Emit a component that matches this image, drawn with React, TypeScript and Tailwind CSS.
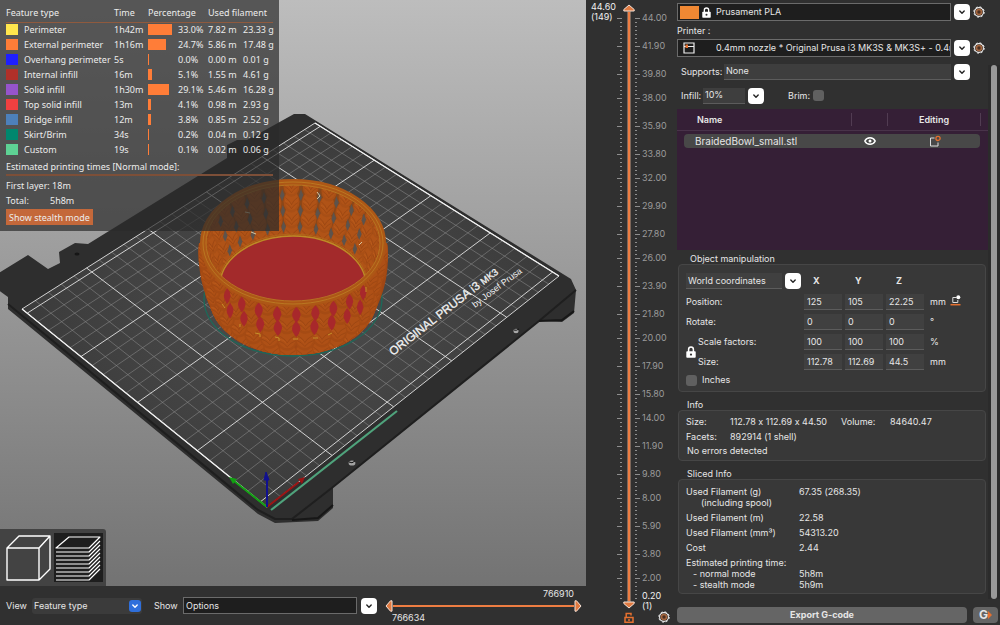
import { ReactNode } from 'react';
import clsx from 'clsx';

const features = [
    { name: 'Perimeter', color: '#ffe64d', time: '1h42m', pct: 33.0, m: '7.82 m', g: '23.33 g' },
    { name: 'External perimeter', color: '#ff7d38', time: '1h16m', pct: 24.7, m: '5.86 m', g: '17.48 g' },
    { name: 'Overhang perimeter', color: '#1f1fff', time: '5s', pct: 0.0, m: '0.00 m', g: '0.01 g' },
    { name: 'Internal infill', color: '#b03029', time: '16m', pct: 5.1, m: '1.55 m', g: '4.61 g' },
    { name: 'Solid infill', color: '#9654cc', time: '1h30m', pct: 29.1, m: '5.46 m', g: '16.28 g' },
    { name: 'Top solid infill', color: '#f04040', time: '13m', pct: 4.1, m: '0.98 m', g: '2.93 g' },
    { name: 'Bridge infill', color: '#4d80ba', time: '12m', pct: 3.8, m: '0.85 m', g: '2.52 g' },
    { name: 'Skirt/Brim', color: '#00876e', time: '34s', pct: 0.2, m: '0.04 m', g: '0.12 g' },
    { name: 'Custom', color: '#5ed194', time: '19s', pct: 0.1, m: '0.02 m', g: '0.06 g' },
];

// labelled layer heights, keyed by tick index (one tick = 0.3 mm)
const layerLabels: Record<number, string> = {
    0: '44.00',
    7: '41.90',
    14: '39.80',
    20: '38.00',
    27: '35.90',
    34: '33.80',
    40: '32.00',
    47: '29.90',
    54: '27.80',
    60: '26.00',
    67: '23.90',
    74: '21.80',
    80: '20.00',
    87: '17.90',
    94: '15.80',
    100: '14.00',
    107: '11.90',
    114: '9.80',
    120: '8.00',
    127: '5.90',
    134: '3.80',
    140: '2.00',
};

const manipulation = [
    { label: 'Position:', values: ['125', '105', '22.25'], unit: 'mm' },
    { label: 'Rotate:', values: ['0', '0', '0'], unit: '°' },
    { label: 'Scale factors:', values: ['100', '100', '100'], unit: '%' },
    { label: 'Size:', values: ['112.78', '112.69', '44.5'], unit: 'mm' },
];

// bed corners on screen: origin, +x, +x+y, +y
const BED = [
    [267, 507],
    [559, 276],
    [315, 123],
    [22, 309],
];

const project = (u: number, v: number) => {
    const [[x0, y0], [x1, y1], [x2, y2], [x3, y3]] = BED;
    const dx1 = x1 - x2;
    const dx2 = x3 - x2;
    const dx3 = x0 - x1 + x2 - x3;
    const dy1 = y1 - y2;
    const dy2 = y3 - y2;
    const dy3 = y0 - y1 + y2 - y3;
    const det = dx1 * dy2 - dx2 * dy1;
    const g = (dx3 * dy2 - dx2 * dy3) / det;
    const h = (dx1 * dy3 - dx3 * dy1) / det;
    const s = u / 250;
    const t = v / 210;
    const w = g * s + h * t + 1;
    return [((x1 - x0 + g * x1) * s + (x3 - x0 + h * x3) * t + x0) / w, ((y1 - y0 + g * y1) * s + (y3 - y0 + h * y3) * t + y0) / w];
};

const bedLine = (u1: number, v1: number, u2: number, v2: number) => {
    const a = project(u1, v1);
    const b = project(u2, v2);
    return `M${a[0].toFixed(1)} ${a[1].toFixed(1)}L${b[0].toFixed(1)} ${b[1].toFixed(1)}`;
};

const thin: string[] = [];
const bold: string[] = [bedLine(0, 0, 250, 0), bedLine(0, 210, 250, 210)];
for (let u = 0; u <= 250; u += 10) (u % 50 ? thin : bold).push(bedLine(u, 0, u, 210));
for (let v = 0; v <= 200; v += 10) (v % 50 ? thin : bold).push(bedLine(0, v + 5, 250, v + 5));

const ring = (deg: number, t: number, a: number[], b: number[]) => {
    const r = (deg * Math.PI) / 180;
    const mix = (i: number) => a[i] + (b[i] - a[i]) * t;
    return [293 + mix(1) * Math.cos(r), mix(0) + mix(2) * Math.sin(r)];
};

// [center y, rx, ry]
const RIM = [243, 90, 60];
const FLOOR = [286, 72, 50];
const OUTER = [243, 93, 62];
const BASE = [297, 80, 54];

const Braid = ({ inner }: { inner?: boolean }) => {
    const items: ReactNode[] = [];
    const levels = inner ? [0.95, 0.65, 0.35, 0.05] : [1.08, 0.76, 0.4, 0.05];
    levels.forEach((t) => {
        for (let i = 0; i <= (inner ? 14 : 15); i++) {
            const deg = inner ? 181.5 + i * 12.5 : -4 + i * 12.25;
            const [x, y] = inner ? ring(deg, t, RIM, FLOOR) : ring(deg, t, OUTER, BASE);
            const face = Math.abs(Math.sin((deg * Math.PI) / 180));
            const rx = inner ? 5 + 3 * face : 5.5 + 4.5 * face;
            const ry = inner ? 9 + 2 * face : 11;
            const tilt = inner ? (deg - 270) * 0.15 : (90 - deg) * 0.15;
            items.push(
                <g key={`${t}-${i}`} transform={`translate(${x.toFixed(1)} ${y.toFixed(1)}) rotate(${tilt})`} fill="none">
                    <ellipse rx={rx} ry={ry} fill={inner ? '#a84f16' : '#a54b14'} />
                    <ellipse cy="-1" rx={rx - 1.2} ry={ry - 1.5} fill={inner ? '#b05317' : '#ae5016'} />
                    <path
                        d={`M${2 - rx} -4Q${-rx * 0.2} -1 0 3Q${rx * 0.2} -1 ${rx - 2} -4M${1.5 - rx} 1Q${-rx * 0.3} 3 0 7Q${rx * 0.3} 3 ${rx - 1.5} 1`}
                        stroke="#964413"
                        strokeWidth=".9"
                        opacity=".7"
                    />
                    <path d={`M${1.5 - rx} -1Q${-rx * 0.3} 0 -1 3`} stroke="#bf601f" strokeWidth=".8" opacity=".7" />
                </g>
            );
        }
    });
    return <g>{items}</g>;
};

// openings between the strands of the back wall
const BackHoles = () => (
    <g fill="#5d534c">
        {[2, 3, 4, 5, 6, 7, 8, 9, 10, 11].map((i) =>
            [0.22, 0.52, 0.82].map((t) => {
                const [x, y] = ring(187.75 + i * 12.5, t, RIM, FLOOR);
                return <path key={`${i}-${t}`} d={`M${x} ${y - 6}L${x + 2.4} ${y}L${x} ${y + 6}L${x - 2.2} ${y + 1}z`} />;
            })
        )}
    </g>
);

// red shells showing through the holes of the front wall
const Gaps = () => (
    <g fill="#a8282b">
        {[3, 4, 5, 6, 7, 8, 9, 10, 11].map((i) =>
            [0.22, 0.52].map((t) => {
                const deg = 2.1 + i * 12.25;
                const [x, y] = ring(deg, t, OUTER, BASE);
                const w = 1.6 + 2.6 * Math.sin((deg * Math.PI) / 180);
                return <path key={`${i}-${t}`} d={`M${x} ${y - 8}Q${x + w} ${y - 4} ${x + w} ${y}Q${x + w - 1} ${y + 5} ${x} ${y + 8}Q${x - w} ${y + 3} ${x - w} ${y}Q${x - w} ${y - 4} ${x} ${y - 8}z`} />;
            })
        )}
    </g>
);

const Scene = () => (
    <svg className="block h-full w-full" viewBox="0 0 586 586" preserveAspectRatio="xMinYMid slice" role="img" aria-label="Sliced model on the print bed">
        <defs>
            <linearGradient id="sky" x1="0" y1="0" x2="0" y2="1">
                <stop offset="0" stopColor="#bdbdbd" />
                <stop offset="1" stopColor="#737373" />
            </linearGradient>
            <radialGradient id="sheet" cx=".5" cy=".5" r=".5">
                <stop offset="0" stopColor="#4d4d4d" />
                <stop offset="1" stopColor="#3b3b3b" />
            </radialGradient>
            <clipPath id="mouth">
                <ellipse cx="293" cy="243" rx="88" ry="59" />
            </clipPath>
            <clipPath id="wall">
                <path d="M199 243C197 270 203 291 211 309C222 340 258 355 293 355C330 355 366 340 376 309C385 290 390 270 387 243z" />
            </clipPath>
        </defs>
        <rect width="586" height="586" fill="url(#sky)" />

        <path d="M294 114h11L571 279L576 290L574 313L562 322L539 321L333 487V508L318 521L275 523L258 514L8 309V297L-3 289V274L28 255L48 269L60 263L59 252L75 243L88 244L227 158V145L237 140L247 140z" fill="#2e2e2e" />
        <path d="M8 304L258 510L275 519L292 519L333 487L539 321L576 290" fill="none" stroke="#1f1f1f" strokeWidth="2" />
        <path d="M292 520L318 518L333 505M539 321L562 320L574 311" fill="none" stroke="#171717" strokeWidth="2" />
        <polygon points={BED.map((p) => p.join(',')).join(' ')} fill="url(#sheet)" />
        <path d={thin.join('')} stroke="#8a8a8a" strokeWidth=".7" fill="none" opacity=".8" />
        <path d={bold.join('')} stroke="#e2e2e2" strokeWidth="1" fill="none" opacity=".9" />
        <path d={bedLine(0, 0, 0, 210) + bedLine(250, 0, 250, 210)} stroke="#f0f0f0" strokeWidth="1.3" fill="none" />
        <ellipse cx="77" cy="254" rx="2.5" ry="1.6" fill="#161616" />
        <g>
            <ellipse cx="352" cy="463" rx="3.4" ry="2.6" fill="#a2a2a2" />
            <path d="M349 462q3 2 6 -1" stroke="#111" fill="none" />
            <ellipse cx="516" cy="331" rx="2.6" ry="2.2" fill="#a8a8a8" />
            <path d="M514 330q2 1 5 -1" stroke="#111" fill="none" />
        </g>
        <g fill="#f2f2f2" fontFamily="Liberation Sans, sans-serif">
            <text transform="translate(393 356) rotate(-38)" fontSize="11.8" stroke="#f2f2f2" strokeWidth=".3">
                ORIGINAL PRUSA i3 <tspan fontSize="9.5">MK3</tspan>
            </text>
            <text transform="translate(475 308) rotate(-37)" fontSize="9">
                by Josef Prusa
            </text>
        </g>

        {/* skirt */}
        <ellipse cx="293" cy="299" rx="89" ry="57" fill="none" stroke="#1c6a5a" strokeWidth="1.3" />

        {/* bowl */}
        <path d="M199 243C197 270 203 291 211 309C222 340 258 355 293 355C330 355 366 340 376 309C385 290 390 270 387 243z" fill="#a04714" />
        <g clipPath="url(#wall)">
            <Braid />
            <Gaps />
            <path d="M255 333l5 1v3M275 337l4 1v3M293 339h5M313 338h5M332 333l-4 2M222 304l3 4M240 324v3M366 287v5" stroke="#c99a2c" strokeWidth=".9" fill="none" />
        </g>
        <g clipPath="url(#mouth)">
            <rect x="200" y="180" width="190" height="126" fill="#8a4719" />
            <Braid inner />
            <BackHoles />
            <path d="M317 192l3 4l-3 3M251 232l5 2M359 245l3 -3M245 212l5 1" stroke="#d8c6a0" strokeWidth="1" fill="none" />
            <ellipse cx="293" cy="286" rx="73" ry="50" fill="#a32a2b" stroke="#bd8b26" strokeWidth="1.4" />
            <ellipse cx="293" cy="286" rx="75" ry="52" fill="none" stroke="#b0661b" strokeWidth="1" />
        </g>
        <g fill="none">
            <ellipse cx="293" cy="243" rx="90" ry="61" stroke="#ad5716" strokeWidth="6" />
            <ellipse cx="293" cy="243" rx="90" ry="61" stroke="#bb7a22" strokeWidth=".9" />
            <ellipse cx="293" cy="243" rx="87" ry="58" stroke="#b87822" strokeWidth=".9" />
        </g>

        {/* purge line and axes */}
        <path d="M271 510L397 411" stroke="#4fa37c" strokeWidth="2.2" />
        <path d="M267 507L299 482" stroke="#9b1414" strokeWidth="2" />
        <path d="M305 477L298 479L302 484z" fill="#9b1414" />
        <path d="M267 507L234 481" stroke="#12a012" strokeWidth="2" />
        <path d="M229 477L237 479L233 484z" fill="#12a012" />
        <path d="M267 507V480" stroke="#101090" strokeWidth="2" />
        <path d="M266 472L269 480H264z" fill="#101090" stroke="#101090" />
    </svg>
);

const Legend = () => (
    <div className="absolute top-0 left-0 h-[231px] w-[279px] bg-[#2b2b2b]/70 px-[6px] pt-[6px] font-['Noto_Sans'] text-[9px] leading-[13px] text-[#ececec]">
        <table className="w-full table-fixed border-collapse text-left whitespace-nowrap">
            <colgroup>
                <col className="w-[18px]" />
                <col className="w-[90px]" />
                <col className="w-[34px]" />
                <col className="w-[30px]" />
                <col className="w-[30px]" />
                <col className="w-[35px]" />
                <col />
            </colgroup>
            <thead>
                <tr className="h-[16px] border-b border-[#8f5a3e] align-top">
                    <th colSpan={2} className="p-0 font-normal">Feature type</th>
                    <th className="p-0 font-normal">Time</th>
                    <th colSpan={2} className="p-0 font-normal">Percentage</th>
                    <th colSpan={2} className="p-0 font-normal">Used filament</th>
                </tr>
            </thead>
            <tbody>
                {features.map((f) => (
                    <tr key={f.name} className="h-[15px]">
                        <td className="p-0">
                            <div className="h-[11px] w-[12px]" style={{ backgroundColor: f.color }} />
                        </td>
                        <td className="p-0">{f.name}</td>
                        <td className="p-0">{f.time}</td>
                        <td className="p-0">
                            <div className="h-[11px] min-w-px bg-[#ff7d38]" style={{ width: f.pct * 0.72 }} />
                        </td>
                        <td className="p-0">{f.pct.toFixed(1)}%</td>
                        <td className="p-0">{f.m}</td>
                        <td className="p-0">{f.g}</td>
                    </tr>
                ))}
            </tbody>
        </table>
        <div className="mt-[3px] border-b-2 border-[#7d4f38] pb-px">Estimated printing times [Normal mode]:</div>
        <div className="mt-[2px] leading-[15px]">First layer: 18m</div>
        <div className="flex leading-[15px]">
            <span className="w-[44px]">Total:</span>
            <span>5h8m</span>
        </div>
        <button className="mt-px h-[16px] bg-[#c4683a] px-[3px]">Show stealth mode</button>
    </div>
);

const Chevron = () => (
    <svg viewBox="0 0 8 8" className="h-[8px] w-[8px]" fill="none" stroke="currentColor" strokeWidth="1.4" strokeLinecap="round" strokeLinejoin="round">
        <path d="M1.8 3L4 5.2L6.2 3" />
    </svg>
);

const DropButton = ({ label }: { label: string }) => (
    <button aria-label={label} className="flex h-[16px] w-[16px] shrink-0 items-center justify-center rounded-[4px] bg-white text-[#222]">
        <Chevron />
    </button>
);

const Gear = () => (
    <svg viewBox="0 0 12 12" className="h-[12px] w-[12px]">
        <circle cx="6" cy="6" r="4.4" fill="#2b211c" stroke="#f2f2f2" strokeWidth="1.1" />
        <circle cx="6" cy="6" r="5.2" fill="none" stroke="#f2f2f2" strokeWidth="1" strokeDasharray="2 2.08" />
        <circle cx="6" cy="6" r="2.5" fill="#4a3022" stroke="#a5663f" strokeWidth="1.6" />
    </svg>
);

const LockIcon = ({ className }: { className?: string }) => (
    <svg viewBox="0 0 10 12" className={className}>
        <path d="M2.6 6V3.4a2.4 2.4 0 0 1 4.8 0V6" fill="none" stroke="#fff" strokeWidth="1.5" />
        <rect x=".3" y="5.2" width="9.4" height="6.6" rx=".8" fill="#fff" />
        <circle cx="5" cy="8.6" r="1.1" fill="#333" />
    </svg>
);

const ViewToggle = () => (
    <div className="absolute bottom-0 left-0 flex h-[57px] w-[106px] items-center gap-[3px] rounded-tr-[3px] bg-[#434343] pl-[4px]">
        <button aria-label="3D editor view" className="h-[49px] w-[47px]">
            <svg viewBox="0 0 47 49" fill="none" stroke="#fff" strokeWidth="1.4" strokeLinejoin="round">
                <path d="M3 15H35V47H3zM3 15L15 3H46L35 15M46 3V36L35 47" />
            </svg>
        </button>
        <button aria-label="Preview" className="h-[49px] w-[49px] bg-[#1e1e1e]">
            <svg viewBox="0 0 49 49" fill="none" stroke="#fff" strokeWidth="1.2" strokeLinejoin="round">
                <path d="M2 15L15 4H46L35 15z" />
                {[19, 23, 27, 31, 35, 39, 43, 47].map((y) => (
                    <path key={y} d={`M2 ${y}H35L46 ${y - 11}`} />
                ))}
            </svg>
        </button>
    </div>
);

const BottomBar = () => (
    <div className="flex h-[39px] shrink-0 items-center pl-[6px] text-[9px]">
        <label htmlFor="view" className="w-[26px]">View</label>
        <div className="relative w-[110px]">
            <select id="view" className="h-[16px] w-full appearance-none rounded-[3px] bg-[#3b3b3b] pl-[2px]">
                <option>Feature type</option>
            </select>
            <span className="pointer-events-none absolute top-[2px] right-px flex h-[12px] w-[12px] items-center justify-center rounded-[3px] bg-[#2f6fdb] text-white">
                <Chevron />
            </span>
        </div>
        <label htmlFor="show" className="ml-[12px] w-[29px]">Show</label>
        <select id="show" className="h-[17px] w-[174px] appearance-none border border-[#6b6b6b] bg-[#1e1e1e] pl-[2px]">
            <option>Options</option>
        </select>
        <span className="ml-[4px] flex">
            <DropButton label="Show options" />
        </span>
        <div className="relative ml-[8px] flex h-full flex-1 flex-col justify-between pr-[4px]">
            <span className="pt-[2px] pr-[8px] text-right leading-[12px]">766910</span>
            <div className="flex items-center">
                <svg viewBox="0 0 8 12" className="h-[12px] w-[8px] shrink-0" fill="#e07a41" stroke="#f6e3d8" strokeLinejoin="round">
                    <path d="M7 .8V11.2H5.5L1 6L5.5 .8z" />
                </svg>
                <div className="h-[2px] flex-1 bg-[#ee7d42]" />
                <svg viewBox="0 0 8 12" className="h-[12px] w-[8px] shrink-0" fill="#e07a41" stroke="#f6e3d8" strokeLinejoin="round">
                    <path d="M1 .8V11.2H2.5L7 6L2.5 .8z" />
                </svg>
            </div>
            <span className="pb-px pl-[7px] leading-[12px]">766634</span>
            <input type="range" aria-label="Move range" className="absolute top-[14px] left-0 h-[12px] w-full opacity-0" />
        </div>
    </div>
);

const LayerSlider = () => (
    <div className="relative flex w-[90px] shrink-0 flex-col pt-[16px] text-[9px]">
        <div className="absolute top-[2px] left-[5px] leading-[10px] text-[#f0f0f0]">
            44.60
            <br />
            (149)
        </div>
        <div className="flex min-h-0 flex-1 flex-col">
            {Array.from({ length: 146 }, (_, i) => (
                <div key={i} className="flex min-h-0 flex-1 items-center">
                    <div className="flex w-[36px] justify-end">
                        <span className={clsx('h-px bg-[#8e8e8e]', layerLabels[i] ? 'w-[5px]' : 'w-[2px]')} />
                    </div>
                    <div className="flex w-[19px] pl-[13px]">
                        <span className={clsx('h-px shrink-0 bg-[#8e8e8e]', layerLabels[i] ? 'w-[5px]' : 'w-[2px]')} />
                    </div>
                    {layerLabels[i] && <span className="flex h-0 items-center pl-px text-[#9b9b9b]">{layerLabels[i]}</span>}
                </div>
            ))}
        </div>
        <div className="h-[25px] shrink-0" />
        <div className="absolute top-[4px] bottom-[16px] left-[37px] flex w-[12px] flex-col items-center">
            <svg viewBox="0 0 12 8" className="h-[8px] w-[12px] shrink-0" fill="#e07a41" stroke="#f6e3d8" strokeLinejoin="round">
                <path d="M.8 7H11.2V5.5L6 1L.8 5.5z" />
            </svg>
            <div className="w-[2px] flex-1 bg-[#ee7d42] outline outline-[#f3b898]/40" />
            <svg viewBox="0 0 12 8" className="h-[8px] w-[12px] shrink-0" fill="#e07a41" stroke="#f6e3d8" strokeLinejoin="round">
                <path d="M.8 1H11.2V2.5L6 7L.8 2.5z" />
            </svg>
            <input type="range" aria-label="Layer height" className="absolute inset-0 h-full w-full opacity-0 [writing-mode:vertical-lr]" />
        </div>
        <div className="absolute bottom-[14px] left-[56px] leading-[10px] text-[#f0f0f0]">
            0.20
            <br />
            (1)
        </div>
        <button aria-label="Unlock range" className="absolute bottom-[2px] left-[38px]">
            <svg viewBox="0 0 10 11" className="h-[11px] w-[10px]" fill="none" stroke="#e5702f" strokeWidth="1.5">
                <path d="M1 5.5H9V10.2H1zM2.2 5V1.5H7V3.5M4 8H6" />
            </svg>
        </button>
        <button aria-label="Slider settings" className="absolute bottom-[2px] left-[72px]">
            <Gear />
        </button>
    </div>
);

const Box = ({ title, className, children }: { title: string; className?: string; children: ReactNode }) => (
    <section>
        <h2 className={clsx('h-[12px] leading-[14px]', className)}>{title}</h2>
        <div className="mr-[2px] ml-px rounded-[4px] border border-[#464646] bg-[#383838] pl-[7px]">{children}</div>
    </section>
);

const Manipulation = () => (
    <Box title="Object manipulation" className="ml-[13px]">
        <div className="relative h-[126px] pt-[7px]">
            <div className="flex h-[18px] items-center">
                <select aria-label="Coordinates" className="h-[16px] w-[96px] appearance-none border-b border-[#5c5c5c] bg-[#404040] pl-[2px]">
                    <option>World coordinates</option>
                </select>
                <span className="ml-[3px] flex">
                    <DropButton label="Choose coordinates" />
                </span>
                <div className="ml-[12px] flex font-bold">
                    <span className="w-[42px]">X</span>
                    <span className="w-[41px]">Y</span>
                    <span>Z</span>
                </div>
            </div>
            <div className="mt-[4px] flex flex-col gap-[4px]">
                {manipulation.map((row, i) => (
                    <div key={row.label} className="flex h-[16px] items-center">
                        <span className={clsx('w-[118px]', i > 1 && 'pl-[12px]')}>{row.label}</span>
                        <div className="flex gap-[3px]">
                            {row.values.map((value, k) => (
                                <input
                                    key={k}
                                    aria-label={`${row.label} ${'XYZ'[k]}`}
                                    defaultValue={value}
                                    className="h-[16px] w-[38px] border-b border-[#5c5c5c] bg-[#404040] pl-[3px]"
                                />
                            ))}
                        </div>
                        <span className="ml-[6px] w-[20px]">{row.unit}</span>
                        {i === 0 && (
                            <button aria-label="Drop to bed">
                                <svg viewBox="0 0 11 11" className="mb-[3px] h-[11px] w-[11px]" fill="none">
                                    <path d="M6 2.5H2.8V7.5H7.8V5" stroke="#ddd" />
                                    <circle cx="8.3" cy="2.2" r="2" fill="#fff" />
                                    <path d="M.5 9.7H10.5" stroke="#e5702f" strokeWidth="1.5" />
                                </svg>
                            </button>
                        )}
                    </div>
                ))}
            </div>
            <label className="mt-[3px] flex h-[14px] items-center">
                <input type="checkbox" className="mr-[5px] h-[11px] w-[11px] appearance-none rounded-[3px] bg-[#606060]" />
                Inches
            </label>
            <button aria-label="Lock scale" className="absolute top-[81px] left-0">
                <LockIcon className="h-[12px] w-[10px]" />
            </button>
        </div>
    </Box>
);

const Sidebar = () => (
    <aside className="flex w-[324px] shrink-0 flex-col pl-px text-[9px]">
        <div className="flex items-center gap-[3px] pt-[3px]">
            <div className="flex h-[18px] w-[274px] items-center border border-[#6b6b6b] bg-[#1e1e1e] pl-[2px]">
                <span className="h-[13px] w-[19px] shrink-0 bg-[#f08833]" />
                <LockIcon className="mx-[3px] h-[11px] w-[9px] shrink-0" />
                <select aria-label="Filament" className="min-w-0 flex-1 appearance-none pl-[2px]">
                    <option>Prusament PLA</option>
                </select>
            </div>
            <DropButton label="Choose filament" />
            <button aria-label="Edit filament"><Gear /></button>
        </div>
        <label htmlFor="printer" className="h-[18px] leading-[19px]">Printer :</label>
        <div className="flex items-center gap-[3px]">
            <div className="flex h-[18px] w-[274px] items-center border border-[#6b6b6b] bg-[#1e1e1e] pl-[5px]">
                <svg viewBox="0 0 12 12" className="h-[12px] w-[12px] shrink-0" fill="none">
                    <path d="M1 1H11V11H1zM1 4.5H11" stroke="#eee" strokeWidth="1.2" />
                    <path d="M2.5 2.5H5V6H2.5z" fill="#e5702f" />
                </svg>
                <select id="printer" className="ml-[21px] min-w-0 flex-1 appearance-none">
                    <option>0.4mm nozzle * Original Prusa i3 MK3S &amp; MK3S+ - 0.4mm nozzle</option>
                </select>
            </div>
            <DropButton label="Choose printer" />
            <button aria-label="Edit printer"><Gear /></button>
        </div>

        <div className="flex min-h-0 flex-1 justify-between">
            <div className="w-[311px] pt-[6px]">
                <div className="flex h-[17px] items-center">
                    <label htmlFor="supports" className="w-[47px] pl-[4px]">Supports:</label>
                    <select id="supports" className="h-[16px] w-[227px] appearance-none border-b border-[#5c5c5c] bg-[#3e3e3e] pl-[2px]">
                        <option>None</option>
                    </select>
                    <span className="ml-[3px] flex">
                        <DropButton label="Choose supports" />
                    </span>
                </div>
                <div className="mt-[7px] flex h-[17px] items-center">
                    <label htmlFor="infill" className="w-[26px] pl-[4px]">Infill:</label>
                    <select id="infill" className="h-[16px] w-[42px] appearance-none border-b border-[#5c5c5c] bg-[#3e3e3e] pl-[2px]">
                        <option>10%</option>
                    </select>
                    <span className="ml-[3px] flex">
                        <DropButton label="Choose infill" />
                    </span>
                    <label className="ml-[24px] flex items-center">
                        Brim:
                        <input type="checkbox" className="ml-[3px] h-[11px] w-[11px] appearance-none rounded-[3px] bg-[#606060]" />
                    </label>
                </div>

                <div className="mt-[5px] h-[141px] bg-[#351f36]">
                    <div className="flex h-[22px] items-center border-b border-[#49334a] font-semibold">
                        <span className="w-[174px] pl-[20px]">Name</span>
                        <span className="h-[13px] w-[37px] border-x border-[#513c52]" />
                        <span className="flex h-[13px] flex-1 items-center justify-center border-r border-[#513c52]">Editing</span>
                        <span className="w-[7px]" />
                    </div>
                    <div className="mt-[3px] mr-[8px] ml-[7px] flex h-[14px] items-center rounded-[4px] bg-[#484848] text-[10px]">
                        <span className="w-[180px] pl-[11px]">BraidedBowl_small.stl</span>
                        <button aria-label="Toggle visibility">
                            <svg viewBox="0 0 12 10" className="h-[10px] w-[12px]" fill="none" stroke="#fff" strokeWidth="1.5">
                                <path d="M.8 5C3 .6 9 .6 11.2 5C9 9.4 3 9.4 .8 5z" />
                                <circle cx="6" cy="5" r="1.5" fill="#fff" stroke="none" />
                            </svg>
                        </button>
                        <button aria-label="Edit object settings" className="ml-[53px]">
                            <svg viewBox="0 0 12 12" className="h-[12px] w-[12px]" fill="none">
                                <path d="M5.5 3H1.5V11H9V7.5" stroke="#ddd" />
                                <circle cx="9" cy="3.4" r="2.1" stroke="#e5702f" strokeWidth="1.3" />
                            </svg>
                        </button>
                    </div>
                </div>

                <div className="flex flex-col gap-[6px] pt-[2px]">
                    <Manipulation />
                    <Box title="Info" className="ml-[10px]">
                        <div className="h-[49px] pt-[3px] leading-[15px]">
                            <div className="flex">
                                <span className="w-[44px]">Size:</span>
                                <span className="w-[111px]">112.78 x 112.69 x 44.50</span>
                                <span className="w-[49px]">Volume:</span>
                                <span>84640.47</span>
                            </div>
                            <div className="flex">
                                <span className="w-[44px]">Facets:</span>
                                <span>892914 (1 shell)</span>
                            </div>
                            <div className="pl-px leading-[13px]">No errors detected</div>
                        </div>
                    </Box>
                    <Box title="Sliced Info" className="ml-[10px]">
                        <dl className="grid h-[113px] grid-cols-[113px_1fr] content-start gap-y-[4px] pt-[6px] leading-[11px]">
                            <dt>
                                Used Filament (g)
                                <span className="block pl-[15px]">(including spool)</span>
                            </dt>
                            <dd>67.35 (268.35)</dd>
                            <dt>Used Filament (m)</dt>
                            <dd>22.58</dd>
                            <dt>Used Filament (mm³)</dt>
                            <dd>54313.20</dd>
                            <dt>Cost</dt>
                            <dd>2.44</dd>
                            <dt>
                                Estimated printing time:
                                <span className="block pl-[7px]">- normal mode</span>
                                <span className="block pl-[7px]">- stealth mode</span>
                            </dt>
                            <dd className="pt-[11px]">
                                5h8m
                                <span className="block">5h9m</span>
                            </dd>
                        </dl>
                    </Box>
                </div>
            </div>
            <div className="mt-[8px] mb-[6px] w-[12px] bg-[#2b2b2b] pl-[3px]">
                <div className="h-full w-[6px] rounded-full bg-[#999]" />
            </div>
        </div>

        <div className="flex h-[20px] shrink-0 items-center gap-[6px] pr-[2px]">
            <button className="h-[16px] flex-1 rounded-[4px] bg-[#656565] text-[9px] font-bold">Export G-code</button>
            <button aria-label="Send G-code" className="flex h-[16px] w-[25px] items-center justify-center rounded-[4px] bg-[#656565] text-[12px] font-bold">
                G
                <svg viewBox="0 0 4 8" className="h-[8px] w-[4px]" fill="#e5702f">
                    <path d="M0 0L4 4L0 8z" />
                </svg>
            </button>
        </div>
    </aside>
);

const App = () => (
    <div className="flex h-screen min-h-[600px] overflow-hidden bg-[#303030] font-['Inter',sans-serif] text-[#e6e6e6] [font-feature-settings:'calt'_0]">
        <main className="flex min-w-0 flex-1 flex-col">
            <div className="relative min-h-0 flex-1 overflow-hidden">
                <Scene />
                <Legend />
                <ViewToggle />
            </div>
            <BottomBar />
        </main>
        <LayerSlider />
        <Sidebar />
    </div>
);

export default App;
